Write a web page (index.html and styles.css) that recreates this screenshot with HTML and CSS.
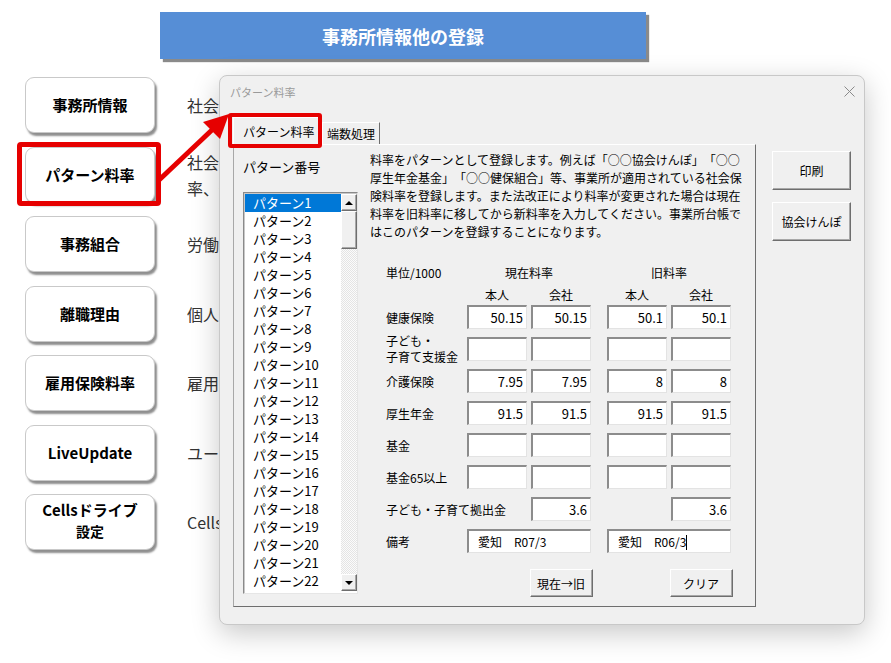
FILE: index.html
```html
<!DOCTYPE html>
<html lang="ja">
  <head>
    <meta charset="UTF-8" />
    <title>事務所情報他の登録</title>
    <link rel="stylesheet" href="styles.css">
  </head>
  <body>
    <div class="sheet">
      <div class="banner">事務所情報他の登録</div>

      <!-- 左のメニューボタンと説明 -->
      <div class="menu">
        <div class="menu-row">
          <button class="menu-btn">事務所情報</button>
          <p class="menu-note">社会保</p>
        </div>
        <div class="menu-row">
          <button class="menu-btn">パターン料率</button>
          <p class="menu-note">社会保<br>率、個</p>
        </div>
        <div class="menu-row">
          <button class="menu-btn">事務組合</button>
          <p class="menu-note">労働保</p>
        </div>
        <div class="menu-row">
          <button class="menu-btn">離職理由</button>
          <p class="menu-note">個人情</p>
        </div>
        <div class="menu-row">
          <button class="menu-btn">雇用保険料率</button>
          <p class="menu-note">雇用保</p>
        </div>
        <div class="menu-row">
          <button class="menu-btn">LiveUpdate</button>
          <p class="menu-note">ユーザ</p>
        </div>
        <div class="menu-row">
          <button class="menu-btn two">
            <span class="line">Cellsドライブ</span>
            <span class="line small">設定</span>
          </button>
          <p class="menu-note">Cells</p>
        </div>
      </div>

      <!-- 赤枠と矢印 -->
      <div class="mark mark-menu"></div>
      <svg class="mark-arrow" width="891" height="663" viewBox="0 0 891 663">
        <line x1="158" y1="181" x2="213" y2="129" stroke="#e60000" stroke-width="5" />
        <polygon points="229,114 220,139 203,122" fill="#e60000" />
      </svg>

      <!-- パターン料率フォーム -->
      <div class="dialog">
        <div class="dlg-title">
          <span>パターン料率</span>
          <svg class="dlg-close" width="11" height="11" viewBox="0 0 11 11">
            <path d="M0.5 0.5 L10.5 10.5 M10.5 0.5 L0.5 10.5" stroke="#8a8a8a" stroke-width="1" fill="none" />
          </svg>
        </div>

        <div class="dlg-body">
          <div class="tabs">
            <div class="tab active">パターン料率</div>
            <div class="tab">端数処理</div>
          </div>

          <div class="dlg-main">
            <div class="tab-panel">
              <div class="pattern-col">
                <div class="pattern-label">パターン番号</div>
                <div class="pattern-list">
                  <div class="pattern-items" id="patternItems"></div>
                  <div class="scroll">
                    <div class="scroll-btn"><span class="tri-up"></span></div>
                    <div class="scroll-thumb"></div>
                    <div class="scroll-track"></div>
                    <div class="scroll-btn"><span class="tri-down"></span></div>
                  </div>
                </div>
              </div>

              <div class="info-col">
                <p class="desc">
                  料率をパターンとして登録します。例えば「○○協会けんぽ」「○○<br>
                  厚生年金基金」「○○健保組合」等、事業所が適用されている社会保<br>
                  険料率を登録します。また法改正により料率が変更された場合は現在<br>
                  料率を旧料率に移してから新料率を入力してください。事業所台帳で<br>
                  はこのパターンを登録することになります。
                </p>

                <div class="rates">
                  <div class="rate-row head">
                    <span>単位/1000</span>
                    <span class="cur-head">現在料率</span>
                    <span class="old-head">旧料率</span>
                  </div>
                  <div class="rate-row sub">
                    <span class="c2">本人</span>
                    <span class="c3">会社</span>
                    <span class="c5">本人</span>
                    <span class="c6">会社</span>
                  </div>
                  <div class="rate-row data">
                    <span>健康保険</span>
                    <div class="field">50.15</div>
                    <div class="field">50.15</div>
                    <div class="field c5">50.1</div>
                    <div class="field">50.1</div>
                  </div>
                  <div class="rate-row data">
                    <span class="two-line">子ども・<br>子育て支援金</span>
                    <div class="field"></div>
                    <div class="field"></div>
                    <div class="field c5"></div>
                    <div class="field"></div>
                  </div>
                  <div class="rate-row data">
                    <span>介護保険</span>
                    <div class="field">7.95</div>
                    <div class="field">7.95</div>
                    <div class="field c5">8</div>
                    <div class="field">8</div>
                  </div>
                  <div class="rate-row data">
                    <span>厚生年金</span>
                    <div class="field">91.5</div>
                    <div class="field">91.5</div>
                    <div class="field c5">91.5</div>
                    <div class="field">91.5</div>
                  </div>
                  <div class="rate-row data">
                    <span>基金</span>
                    <div class="field"></div>
                    <div class="field"></div>
                    <div class="field c5"></div>
                    <div class="field"></div>
                  </div>
                  <div class="rate-row data">
                    <span>基金65以上</span>
                    <div class="field"></div>
                    <div class="field"></div>
                    <div class="field c5"></div>
                    <div class="field"></div>
                  </div>
                  <div class="rate-row data">
                    <span class="wide-label">子ども・子育て拠出金</span>
                    <div class="field c3">3.6</div>
                    <div class="field c6">3.6</div>
                  </div>
                  <div class="rate-row data">
                    <span>備考</span>
                    <div class="field note cur-span">愛知　R07/3</div>
                    <div class="field note old-span">愛知　R06/3<span class="caret"></span></div>
                  </div>
                  <div class="rate-row actions">
                    <button class="btn c3">現在→旧</button>
                    <button class="btn c6">クリア</button>
                  </div>
                </div>
              </div>
            </div>

            <div class="side">
              <button class="btn side-btn">印刷</button>
              <button class="btn side-btn">協会けんぽ</button>
            </div>
          </div>
        </div>
      </div>

      <div class="mark mark-tab"></div>
    </div>

    <script>
      // パターン1〜22をリストに並べる（先頭を選択状態に）
      const list = document.getElementById("patternItems");
      for (let i = 1; i <= 22; i++) {
        const item = document.createElement("div");
        item.className = "pattern-item" + (i === 1 ? " selected" : "");
        item.textContent = "パターン" + i;
        list.appendChild(item);
      }
    </script>
  </body>
</html>
```

FILE: styles.css
```css
body {
  margin: 0;
  background: #fff;
  font-family: "Noto Sans CJK JP", "Noto Sans", sans-serif;
  color: #000;
  text-spacing-trim: space-all;
}

.sheet {
  position: relative;
  width: 891px;
  height: 663px;
  overflow: hidden;
}

.banner {
  margin: 12px 0 0 160px;
  width: 486px;
  height: 47px;
  background: #568ed6;
  color: #fff;
  font-size: 18px;
  font-weight: bold;
  display: flex;
  align-items: center;
  justify-content: center;
  box-shadow: 3px 3px 1px #8a8a8a;
}

/* メニュー */
.menu {
  margin-top: 18px;
  padding-left: 25px;
  display: flex;
  flex-direction: column;
  gap: 13.5px;
}

.menu-row {
  display: flex;
  align-items: center;
  gap: 32px;
}

.menu-btn {
  width: 130px;
  height: 56px;
  background: #fff;
  border: 1px solid #c9c9c9;
  border-radius: 9px;
  box-shadow: 2px 3px 2px #8f8f8f;
  font-family: inherit;
  font-size: 15px;
  font-weight: bold;
  line-height: 18px;
  color: #000;
  padding: 0;
}

.menu-btn.two {
  display: flex;
  flex-direction: column;
  align-items: center;
  justify-content: center;
  gap: 1px;
  padding-bottom: 3px;
}

.menu-btn .line {
  display: block;
  line-height: 20px;
}

.menu-btn .small {
  font-size: 14px;
}

.menu-note {
  margin: 0;
  font-size: 16px;
  line-height: 26px;
  color: #333;
  white-space: nowrap;
}

/* 赤枠・矢印 */
.mark {
  position: absolute;
  border: 5px solid #e60000;
  border-radius: 4px;
  box-sizing: border-box;
  z-index: 5;
}

.mark-menu {
  left: 17px;
  top: 142px;
  width: 144px;
  height: 64px;
}

.mark-tab {
  left: 228px;
  top: 113px;
  width: 94px;
  height: 35px;
  border-width: 4px;
  border-radius: 3px;
}

.mark-arrow {
  position: absolute;
  left: 0;
  top: 0;
  z-index: 6;
  pointer-events: none;
}

/* ダイアログ */
.dialog {
  position: absolute;
  left: 219px;
  top: 75px;
  width: 646px;
  height: 550px;
  box-sizing: border-box;
  background: #f0f0f0;
  border: 1px solid #c8c8c8;
  border-radius: 8px;
  box-shadow: 0 8px 28px rgba(0, 0, 0, 0.22);
  font-size: 12px;
  z-index: 2;
}

.dlg-title {
  height: 31px;
  display: flex;
  align-items: center;
  justify-content: space-between;
  padding: 0 9px 0 10px;
  color: #9a9a9a;
  font-size: 11px;
}

.dlg-body {
  padding: 10px 0 0 13px;
}

.tabs {
  display: flex;
  align-items: flex-end;
  gap: 2px;
  height: 27px;
}

.tab {
  height: 22px;
  box-sizing: border-box;
  padding: 0 4px;
  border: 1px solid #fff;
  border-right-color: #6e6e6e;
  border-bottom: none;
  display: flex;
  align-items: center;
  font-size: 12px;
}

.tab.active {
  width: 87px;
  height: 28px;
  margin-bottom: -1px;
  padding-left: 9px;
  background: #f0f0f0;
  position: relative;
  z-index: 1;
}

.dlg-main {
  display: flex;
}

.tab-panel {
  width: 523px;
  height: 463px;
  box-sizing: border-box;
  border: 1px solid;
  border-color: #fff #6e6e6e #6e6e6e #a8a8a8;
  display: flex;
  padding: 6px 0 0 9px;
}

/* パターン一覧 */
.pattern-col {
  width: 115px;
  display: flex;
  flex-direction: column;
}

.pattern-label {
  margin-top: 7px;
  line-height: 18px;
  font-size: 13px;
}

.pattern-list {
  margin-top: 16px;
  height: 402px;
  box-sizing: border-box;
  background: #fff;
  border: 1px solid;
  border-color: #8a8a8a #e6e6e6 #e6e6e6 #8a8a8a;
  box-shadow: inset 1px 1px 0 #c8c8c8;
  display: flex;
  padding: 1px 0 0 1px;
}

.pattern-items {
  flex: 1;
  overflow: hidden;
}

.pattern-item {
  height: 18px;
  line-height: 18px;
  padding-left: 8px;
  font-size: 13px;
}

.pattern-item.selected {
  background: #0078d7;
  color: #fff;
}

.scroll {
  width: 16px;
  display: flex;
  flex-direction: column;
  padding-bottom: 2px;
}

.scroll-btn,
.scroll-thumb {
  box-sizing: border-box;
  background: #f0f0f0;
  border: 1px solid;
  border-color: #fff #6e6e6e #6e6e6e #fff;
  box-shadow: inset -1px -1px 0 #a8a8a8;
}

.scroll-btn {
  height: 17px;
  display: flex;
  align-items: center;
  justify-content: center;
}

.scroll-thumb {
  height: 38px;
}

.scroll-track {
  flex: 1;
  background: repeating-conic-gradient(#fbfbfb 0 25%, #e4e4e4 0 50%) 0 0 / 2px 2px;
}

.tri-up,
.tri-down {
  width: 0;
  height: 0;
  border-left: 4px solid transparent;
  border-right: 4px solid transparent;
}

.tri-up {
  border-bottom: 4px solid #000;
}

.tri-down {
  border-top: 4px solid #000;
}

/* 説明と料率表 */
.info-col {
  margin-left: 12px;
  width: 380px;
}

.desc {
  margin: 0;
  line-height: 18px;
  font-size: 12px;
  white-space: nowrap;
}

.rates {
  margin-top: 23px;
  padding-left: 16px;
}

.rate-row {
  display: grid;
  grid-template-columns: 77px 60px 60px 8px 60px 60px;
  column-gap: 4px;
  align-items: center;
}

.rate-row.head,
.rate-row.sub {
  height: 18px;
  line-height: 18px;
}

.rate-row.sub {
  margin-top: 4px;
  text-align: center;
}

.rate-row.data {
  grid-template-rows: 24px;
  height: 24px;
  margin-top: 8px;
}

.rate-row.sub + .rate-row.data {
  margin-top: 1px;
}

.cur-head,
.cur-span {
  grid-column: 2 / 4;
}

.old-head,
.old-span {
  grid-column: 5 / 7;
}

.cur-head,
.old-head {
  text-align: center;
}

.c2 { grid-column: 2; }
.c3 { grid-column: 3; }
.c5 { grid-column: 5; }
.c6 { grid-column: 6; }

.two-line {
  line-height: 16px;
}

.wide-label {
  grid-column: 1 / 3;
  white-space: nowrap;
}

.field {
  height: 24px;
  box-sizing: border-box;
  background: #fff;
  border-style: solid;
  border-width: 2px 1px 1px 2px;
  border-color: #8c8c8c #e3e3e3 #e3e3e3 #8c8c8c;
  text-align: right;
  padding-right: 3px;
  font-size: 13px;
  line-height: 21px;
}

.field.note {
  text-align: left;
  padding-left: 9px;
  font-size: 12px;
}

.caret {
  display: inline-block;
  width: 1px;
  height: 15px;
  background: #000;
  vertical-align: -3px;
}

.rate-row.actions {
  margin-top: 16px;
  height: 28px;
}

.btn {
  box-sizing: border-box;
  background: #f0f0f0;
  border: 1px solid;
  border-color: #fff #6e6e6e #6e6e6e #fff;
  box-shadow: inset -1px -1px 0 #a8a8a8;
  font-family: inherit;
  font-size: 12px;
  color: #000;
  padding: 0;
}

.rate-row.actions .btn {
  width: 63px;
  height: 28px;
  justify-self: center;
}

.side {
  padding: 7px 0 0 16px;
  display: flex;
  flex-direction: column;
  gap: 12px;
}

.side-btn {
  width: 79px;
  height: 39px;
}
```
